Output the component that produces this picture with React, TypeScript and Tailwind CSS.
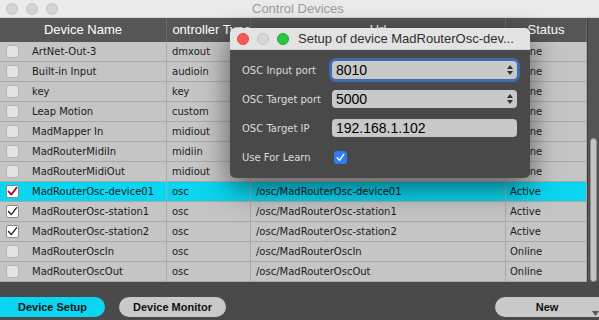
import React from "react";

type Row = {
  name: string;
  type: string;
  url: string;
  status: string;
  checked?: boolean;
  selected?: boolean;
};

const rows: Row[] = [
  { name: "ArtNet-Out-3", type: "dmxout", url: "/artnet/ArtNet-Out-3", status: "Online" },
  { name: "Built-in Input", type: "audioin", url: "/audio/Built-in Input", status: "Online" },
  { name: "key", type: "key", url: "/key", status: "Online" },
  { name: "Leap Motion", type: "custom", url: "/leap/Leap Motion", status: "Online" },
  { name: "MadMapper In", type: "midiout", url: "/midi/MadMapper In", status: "Online" },
  { name: "MadRouterMidiIn", type: "midiin", url: "/midi/MadRouterMidiIn", status: "Online" },
  { name: "MadRouterMidiOut", type: "midiout", url: "/midi/MadRouterMidiOut", status: "Online" },
  { name: "MadRouterOsc-device01", type: "osc", url: "/osc/MadRouterOsc-device01", status: "Active", checked: true, selected: true },
  { name: "MadRouterOsc-station1", type: "osc", url: "/osc/MadRouterOsc-station1", status: "Active", checked: true },
  { name: "MadRouterOsc-station2", type: "osc", url: "/osc/MadRouterOsc-station2", status: "Active", checked: true },
  { name: "MadRouterOscIn", type: "osc", url: "/osc/MadRouterOscIn", status: "Online" },
  { name: "MadRouterOscOut", type: "osc", url: "/osc/MadRouterOscOut", status: "Online" },
];

const cell = "h-full flex items-center border-r border-[#a9a9a9] overflow-hidden whitespace-nowrap";
const headCell = "h-full flex items-center border-r border-[#6a6a6a] overflow-hidden whitespace-nowrap";

function RowCheck({ checked, selected }: { checked?: boolean; selected?: boolean }) {
  if (!checked) {
    return <div className="shrink-0 w-[13px] h-[13px] rounded-[3px] bg-[#e3e3e3] border border-[#b3b3b3]" />;
  }
  return (
    <div className="shrink-0 w-[13px] h-[13px] rounded-[2px] bg-white border border-[#8a8a8a] flex items-center justify-center">
      <svg width="11" height="11" viewBox="0 0 11 11">
        <path
          d="M1.5 5.5 L4.3 8.6 L9.6 1.6"
          fill="none"
          stroke={selected ? "#8d1538" : "#1a1a1a"}
          strokeWidth={selected ? 1.8 : 1.3}
          strokeLinecap="round"
          strokeLinejoin="round"
        />
      </svg>
    </div>
  );
}

function Stepper() {
  return (
    <div className="flex flex-col gap-[2px] mr-[4px]">
      <svg width="6" height="4" viewBox="0 0 6 4">
        <path d="M0 4 L3 0 L6 4 Z" fill="#333" />
      </svg>
      <svg width="6" height="4" viewBox="0 0 6 4">
        <path d="M0 0 L3 4 L6 0 Z" fill="#333" />
      </svg>
    </div>
  );
}

function Dialog() {
  const label = "shrink-0 w-[90px] text-[10px] text-[#dcdcdc]";
  const field =
    "shrink-0 w-[185px] h-[18px] rounded-[4px] bg-[#c8c8c8] flex items-center justify-between pl-[4px] text-[14px] text-black font-['Liberation_Sans',sans-serif]";
  return (
    <div className="absolute left-[230px] top-[28px] w-[300px] rounded-[5px] overflow-hidden shadow-[0_10px_30px_rgba(0,0,0,0.55)]">
      <div className="h-[22px] bg-[#e3e3e3] flex items-center px-[7px] border-b border-[#cfcfcf]">
        <div className="flex gap-[8px]">
          <span className="w-[12px] h-[12px] rounded-full bg-[#fc5753] border border-[#df4744]" />
          <span className="w-[12px] h-[12px] rounded-full bg-[#d6d6d6] border border-[#c2c2c2]" />
          <span className="w-[12px] h-[12px] rounded-full bg-[#2ac840] border border-[#1ea632]" />
        </div>
        <span className="ml-[9px] text-[13px] text-[#2e2e2e] font-['Liberation_Sans',sans-serif] whitespace-nowrap">
          Setup of device MadRouterOsc-dev...
        </span>
      </div>
      <div className="bg-[#494949] pl-[12px] pt-[11px] pb-[12px] flex flex-col gap-[11px] font-['DejaVu_Sans',sans-serif]">
        <div className="h-[18px] flex items-center">
          <span className={label}>OSC Input port</span>
          <div className={field + " ring-[3px] ring-[#3d6db0]"}>
            <span>8010</span>
            <Stepper />
          </div>
        </div>
        <div className="h-[18px] flex items-center">
          <span className={label}>OSC Target port</span>
          <div className={field}>
            <span>5000</span>
            <Stepper />
          </div>
        </div>
        <div className="h-[18px] flex items-center">
          <span className={label}>OSC Target IP</span>
          <div className={field}>
            <span>192.168.1.102</span>
          </div>
        </div>
        <div className="h-[18px] flex items-center">
          <span className={label}>Use For Learn</span>
          <div className="ml-[2px] w-[13px] h-[13px] rounded-[3px] bg-[#2f7df6] flex items-center justify-center">
            <svg width="9" height="9" viewBox="0 0 9 9">
              <path d="M1.3 4.8 L3.5 7.3 L7.8 1.4" fill="none" stroke="white" strokeWidth="1.4" strokeLinecap="round" strokeLinejoin="round" />
            </svg>
          </div>
        </div>
      </div>
    </div>
  );
}

export default function App() {
  return (
    <div className="relative w-[599px] h-[320px] overflow-hidden bg-[#4a4a4a] flex flex-col">
      {/* window title bar */}
      <div className="h-[18px] shrink-0 bg-[#ebebeb] border-b border-[#d2d2d2] flex items-center">
        <div className="flex gap-[8px] pl-[6px]">
          <span className="w-[12px] h-[12px] rounded-full bg-[#d4d4d4] border border-[#c4c4c4]" />
          <span className="w-[12px] h-[12px] rounded-full bg-[#d4d4d4] border border-[#c4c4c4]" />
          <span className="w-[12px] h-[12px] rounded-full bg-[#d4d4d4] border border-[#c4c4c4]" />
        </div>
        <span className="ml-[194px] text-[13px] text-[#9c9c9c] font-['Liberation_Sans',sans-serif]">
          Control Devices
        </span>
      </div>

      {/* table + scrollbar */}
      <div className="flex shrink-0">
        <div className="w-[587px]">
          <div className="h-[24px] grid grid-cols-[167px_84px_255px_81px] bg-[#565656] text-white text-[13px] font-['Liberation_Sans',sans-serif]">
            <div className={headCell + " justify-center"}>Device Name</div>
            <div className={headCell + " pl-[5px]"}>
              <div className="flex-1 overflow-hidden flex">
                <span className="shrink-0 -ml-[9px]">Controller Type</span>
              </div>
            </div>
            <div className={headCell + " justify-center"}>Url</div>
            <div className={headCell + " justify-center"}>Status</div>
          </div>
          {rows.map((r) => (
            <div
              key={r.name}
              className={
                "h-[20px] grid grid-cols-[167px_84px_255px_81px] border-b border-[#a9a9a9] text-[10px] text-[#1b1b1b] font-['DejaVu_Sans',sans-serif] " +
                (r.selected ? "bg-[#0bd6f1]" : "bg-[#c5c5c5]")
              }
            >
              <div className={cell + " pl-[6px] gap-[13px]"}>
                <RowCheck checked={r.checked} selected={r.selected} />
                <span>{r.name}</span>
              </div>
              <div className={cell + " pl-[5px]"}>{r.type}</div>
              <div className={cell + " pl-[5px]"}>{r.url}</div>
              <div className={cell + " pl-[4px]"}>{r.status}</div>
            </div>
          ))}
        </div>
        <div className="w-[12px] bg-[#545454] border-l border-[#3f3f3f] flex flex-col">
          <div className="h-[120px]" />
          <div className="mx-auto w-[7px] flex-1 rounded-full bg-[#c3c3c3] border border-[#8e8e8e]" />
        </div>
      </div>

      {/* bottom bar */}
      <div className="flex-1 flex items-start pt-[15px] font-['Liberation_Sans',sans-serif] text-[11px] font-bold text-[#111]">
        <button className="-ml-[10px] w-[115px] h-[20px] rounded-full bg-[#0bd6f1] pl-[10px]">Device Setup</button>
        <button className="ml-[14px] w-[107px] h-[20px] rounded-full bg-[#c9c9c9]">Device Monitor</button>
        <div className="ml-auto -mr-[12px] w-[116px] h-[20px] rounded-full bg-[#c9c9c9] relative flex items-center justify-center pr-[12px]">
          <span>New</span>
          <svg className="absolute right-[12px] bottom-[1px]" width="7" height="5" viewBox="0 0 7 5">
            <path d="M0 0 L7 0 L3.5 5 Z" fill="#555" />
          </svg>
        </div>
      </div>

      <Dialog />
    </div>
  );
}
